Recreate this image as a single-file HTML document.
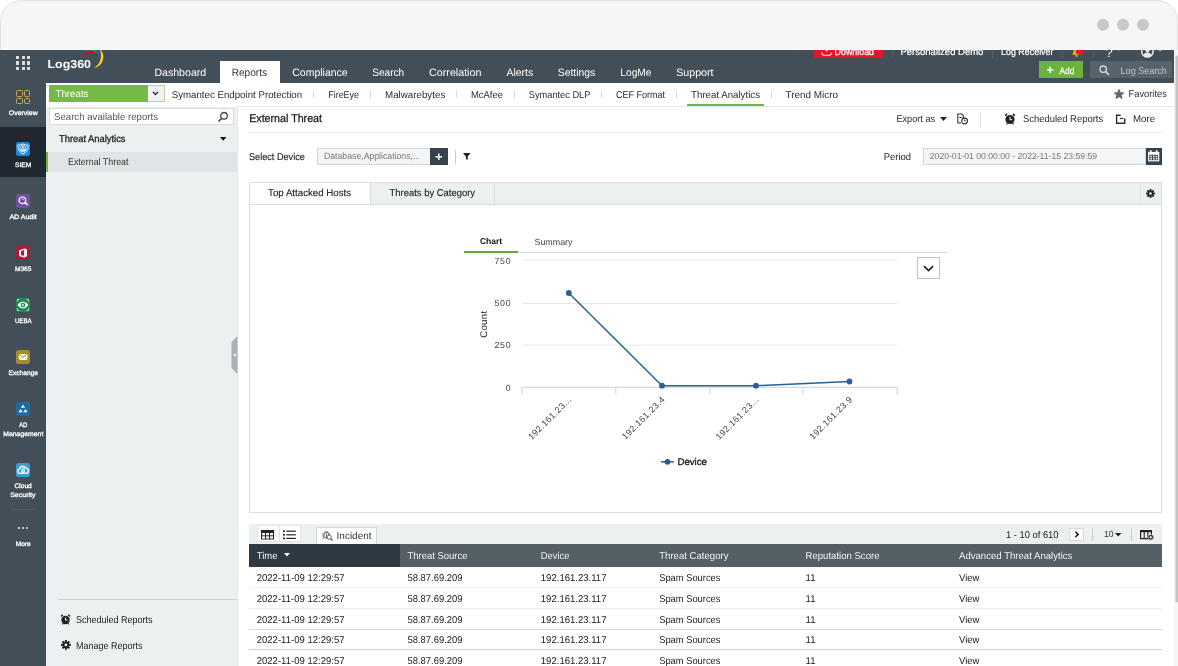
<!DOCTYPE html>
<html><head><meta charset="utf-8"><title>Log360 - External Threat</title>
<style>
html,body{margin:0;padding:0;background:#fff;}
body{width:1178px;height:666px;overflow:hidden;position:relative;font-family:"Liberation Sans",Arial,sans-serif;}
#frame{position:absolute;left:0;top:0;width:1178px;height:700px;box-sizing:border-box;background:#f6f6f6;border:1px solid #e2e2e2;border-radius:21px 21px 0 0;overflow:hidden;}
#app{position:absolute;left:0;top:50px;width:1178px;height:616px;overflow:hidden;background:#fff;}
#in{position:absolute;left:0;top:-50px;width:1178px;height:666px;will-change:transform;}
.t{position:absolute;white-space:nowrap;}
.r{position:absolute;}
svg{position:absolute;overflow:visible;}
</style></head><body>
<div id="frame"></div>
<svg style="left:1090px;top:10px" width="70" height="30" viewBox="0 0 70 30"><circle cx="13" cy="14.700" r="6" fill="#c9c9c9"/><circle cx="32.900" cy="14.700" r="6" fill="#c9c9c9"/><circle cx="52.900" cy="14.700" r="6" fill="#c9c9c9"/></svg>
<div class="r" style="left:1px;top:49px;width:1176px;height:1px;background:#fdfdfd"></div>
<div id="app"><div id="in">
<div class="r" style="left:0.00px;top:50.00px;width:1174.00px;height:33.00px;background:#434f58;"></div>
<div class="r" style="left:1174.00px;top:50.00px;width:4.00px;height:616.00px;background:#f6f6f6;"></div>
<svg style="left:1170px;top:50px" width="8" height="616" viewBox="0 0 8 616"><rect x="5.400" y="5.800" width="3" height="546.5" fill="#c3c3c3"/></svg>
<div class="r" style="left:0.00px;top:82.00px;width:46.00px;height:584.00px;background:#434f58;"></div>
<div class="r" style="left:0.00px;top:127.00px;width:46.00px;height:50.00px;background:#1f2730;"></div>
<div class="r" style="left:15.80px;top:55.80px;width:3.20px;height:3.20px;background:#d9dde0;"></div>
<div class="r" style="left:15.80px;top:61.40px;width:3.20px;height:3.20px;background:#d9dde0;"></div>
<div class="r" style="left:15.80px;top:67.00px;width:3.20px;height:3.20px;background:#d9dde0;"></div>
<div class="r" style="left:21.50px;top:55.80px;width:3.20px;height:3.20px;background:#d9dde0;"></div>
<div class="r" style="left:21.50px;top:61.40px;width:3.20px;height:3.20px;background:#d9dde0;"></div>
<div class="r" style="left:21.50px;top:67.00px;width:3.20px;height:3.20px;background:#d9dde0;"></div>
<div class="r" style="left:27.20px;top:55.80px;width:3.20px;height:3.20px;background:#d9dde0;"></div>
<div class="r" style="left:27.20px;top:61.40px;width:3.20px;height:3.20px;background:#d9dde0;"></div>
<div class="r" style="left:27.20px;top:67.00px;width:3.20px;height:3.20px;background:#d9dde0;"></div>
<svg style="left:80px;top:44px" width="30" height="26" viewBox="0 0 30 26"><path d="M3.60 6.60A6.93 6.93 0 0 1 16.80 10.00A16.95 16.95 0 0 0 3.60 6.60Z" fill="#1f9a48"/><path d="M14.50 4.50A7.49 7.49 0 0 1 19.90 13.90A23.00 23.00 0 0 0 14.50 4.50Z" fill="#1f6bb5"/><path d="M18.60 4.00A10.98 10.98 0 0 1 13.80 23.90A13.76 13.76 0 0 0 18.60 4.00Z" fill="#f4d21f"/><path d="M2.10 13.10A7.78 7.78 0 0 1 16.50 10.40A13.99 13.99 0 0 0 2.10 13.10Z" fill="#c8102e"/></svg>
<div class="r" style="left:813.50px;top:46.00px;width:69.60px;height:11.80px;background:#e8122b;border-radius:2px;"></div>
<svg style="left:820.500px;top:46.200px" width="11.500" height="11" viewBox="0 0 11.500 11"><path d="M5.700 0v4.500M3.700 3l2 2 2-2" stroke="#f7b3bb" stroke-width="1.200" fill="none"/><path d="M.8 6.500c0 2.400 1 2.800 2.600 2.800h4.600c1.600 0 2.600-.4 2.600-2.800" stroke="#f9c3c9" stroke-width="1.300" fill="none"/></svg>
<div class="r" style="left:891.50px;top:46.00px;width:1.00px;height:11.50px;background:#535f67;"></div>
<div class="r" style="left:991.50px;top:46.00px;width:1.00px;height:11.50px;background:#535f67;"></div>
<div class="r" style="left:1062.00px;top:46.00px;width:1.00px;height:11.50px;background:#535f67;"></div>
<svg style="left:1070px;top:44px" width="16" height="16" viewBox="0 0 16 16"><path d="M2 10.800c1.300-1 1.200-3 1.700-4.800.5-1.700 1.600-2.300 2.800-2.300s2.300.6 2.800 2.300c.5 1.800.4 3.800 1.700 4.800z" fill="#e9b21c"/><circle cx="6.500" cy="11.800" r="1.100" fill="#e9b21c"/><circle cx="9.600" cy="7" r="3.800" fill="#e3192d"/></svg>
<div class="r" style="left:1092.50px;top:46.00px;width:1.00px;height:11.50px;background:#535f67;"></div>
<svg style="left:1117.3px;top:48.3px" width="4" height="3" viewBox="0 0 4 3"><path d="M0 0h4L2 3z" fill="#aeb5ba"/></svg>
<svg style="left:1140.6px;top:45.2px" width="12.8" height="12.8" viewBox="0 0 14 14"><circle cx="7" cy="7" r="6.200" fill="none" stroke="#e8ebed" stroke-width="1.600"/><circle cx="7" cy="5.800" r="2.300" fill="#e8ebed"/><path d="M2.800 11.200c.5-2.200 2-3 4.200-3s3.700.8 4.200 3c-1 1.300-2.500 2-4.200 2s-3.200-.7-4.200-2z" fill="#e8ebed"/></svg>
<svg style="left:1157.5px;top:48.8px" width="4" height="3" viewBox="0 0 4 3"><path d="M0 0h4L2 3z" fill="#aeb5ba"/></svg>
<div class="r" style="left:219.50px;top:61.00px;width:60.00px;height:22.00px;background:#fff;"></div>
<div class="r" style="left:1038.70px;top:61.00px;width:44.20px;height:17.00px;background:#6cb33e;"></div>
<div class="r" style="left:1090.30px;top:61.00px;width:81.30px;height:17.00px;background:#57626a;"></div>
<svg style="left:1098.500px;top:64.500px" width="11" height="11" viewBox="0 0 11 11"><circle cx="4.200" cy="4.200" r="3.200" fill="none" stroke="#d5dadd" stroke-width="1.300"/><path d="M6.600 6.600L10 10" stroke="#d5dadd" stroke-width="1.500"/></svg>
<div class="r" style="left:46.00px;top:83.00px;width:1128.00px;height:22.50px;background:#fff;"></div>
<div class="r" style="left:237.00px;top:105.50px;width:937.00px;height:1.00px;background:#e6e9eb;"></div>
<div class="r" style="left:49.00px;top:85.00px;width:115.50px;height:17.00px;background:#f1f1f1;border:1px solid #b5d69c;box-sizing:border-box;"></div>
<div class="r" style="left:49.00px;top:85.00px;width:98.50px;height:17.00px;background:#77b946;"></div>
<svg style="left:152.300px;top:91.200px" width="7" height="5.250" viewBox="0 0 8 6"><path d="M1 1l3 3 3-3" stroke="#222" stroke-width="1.500" fill="none"/></svg>
<div class="r" style="left:313.00px;top:89.50px;width:1.00px;height:8.50px;background:#d9dcde;"></div>
<div class="r" style="left:369.70px;top:89.50px;width:1.00px;height:8.50px;background:#d9dcde;"></div>
<div class="r" style="left:456.10px;top:89.50px;width:1.00px;height:8.50px;background:#d9dcde;"></div>
<div class="r" style="left:513.50px;top:89.50px;width:1.00px;height:8.50px;background:#d9dcde;"></div>
<div class="r" style="left:601.00px;top:89.50px;width:1.00px;height:8.50px;background:#d9dcde;"></div>
<div class="r" style="left:676.20px;top:89.50px;width:1.00px;height:8.50px;background:#d9dcde;"></div>
<div class="r" style="left:771.25px;top:89.50px;width:1.00px;height:8.50px;background:#d9dcde;"></div>
<div class="r" style="left:687.25px;top:104.00px;width:76.50px;height:2.00px;background:#6fb53f;"></div>
<svg style="left:1112.500px;top:87.500px" width="12" height="12" viewBox="0 0 12 12"><path d="M6 .5l1.700 3.700 4 .4-3 2.700.9 4L6 9.200l-3.600 2.100.9-4-3-2.700 4-.4z" fill="#5f6b74"/></svg>
<div class="r" style="left:46.00px;top:107.00px;width:190.50px;height:560.00px;background:#ecf0f1;"></div>
<div class="r" style="left:236.50px;top:107.00px;width:1.00px;height:560.00px;background:#e6e9eb;"></div>
<div class="r" style="left:49.00px;top:108.00px;width:184.80px;height:16.50px;background:#fff;border:1px solid #d9dcde;box-sizing:border-box;"></div>
<svg style="left:217px;top:110.500px" width="12" height="12" viewBox="0 0 12 12"><circle cx="7" cy="4.800" r="3.300" fill="none" stroke="#444" stroke-width="1.300"/><path d="M4.700 7.300L1.500 10.500" stroke="#444" stroke-width="1.600"/></svg>
<svg style="left:219.500px;top:136.700px" width="7" height="4.400" viewBox="0 0 8 5"><path d="M0 0h7.400L3.700 4.200z" fill="#111"/></svg>
<div class="r" style="left:46.00px;top:152.00px;width:190.50px;height:20.00px;background:#e0e4e6;"></div>
<div class="r" style="left:46.00px;top:152.00px;width:2.00px;height:20.00px;background:#6fb53f;"></div>
<div class="r" style="left:58.00px;top:599.00px;width:179.00px;height:1.00px;background:#cfd3d5;"></div>
<svg style="left:59.800px;top:614px" width="11" height="11" viewBox="0 0 12 12"><circle cx="6" cy="6.500" r="4.600" fill="#222"/><path d="M1.200 2.600L3 .9M10.800 2.600L9 .9" stroke="#222" stroke-width="1.600"/><path d="M2.500 11.300l1-1.200M9.500 11.300l-1-1.200" stroke="#222" stroke-width="1.200"/><path d="M6 3.800v2.900h2.200" stroke="#fff" stroke-width="1" fill="none"/></svg>
<svg style="left:60.800px;top:640.300px" width="9.800" height="9.800" viewBox="0 0 11 11"><g fill="#222"><circle cx="5.500" cy="5.500" r="3.700"/><g id="gt"><rect x="4.400" y="0" width="2.200" height="11"/><rect x="0" y="4.400" width="11" height="2.200"/></g><g transform="rotate(45 5.500 5.500)"><rect x="4.400" y="0" width="2.200" height="11"/><rect x="0" y="4.400" width="11" height="2.200"/></g></g><circle cx="5.500" cy="5.500" r="1.600" fill="#ecf0f1"/></svg>
<svg style="left:230.500px;top:336px" width="7" height="38" viewBox="0 0 7 38"><path d="M6.500 0L0.500 6v26l6 6z" fill="#aab0b5"/><path d="M4.700 17l-2.400 2 2.400 2z" fill="#fff"/></svg>
<div class="r" style="left:249.00px;top:132.00px;width:913.00px;height:1.00px;background:#e6e9eb;"></div>
<svg style="left:939.500px;top:116.500px" width="8" height="5" viewBox="0 0 8 5"><path d="M0 0h7L3.500 4z" fill="#222"/></svg>
<svg style="left:957px;top:113px" width="12" height="12" viewBox="0 0 12 12"><path d="M.8 10V1h4l1.500 1.500V5" stroke="#333" stroke-width="1.100" fill="none"/><path d="M.8 10H4" stroke="#333" stroke-width="1.100"/><path d="M2.300 4.500h2.500" stroke="#333" stroke-width="1"/><circle cx="7.600" cy="8" r="2.900" fill="none" stroke="#333" stroke-width="1.100"/><path d="M7.600 6.500V8h1.300" stroke="#333" stroke-width="0.900" fill="none"/></svg>
<div class="r" style="left:980.30px;top:111.50px;width:1.00px;height:15.00px;background:#dfe2e4;"></div>
<svg style="left:1003.500px;top:112.500px" width="12" height="12" viewBox="0 0 12 12"><circle cx="6" cy="6.500" r="4.600" fill="#222"/><path d="M1.200 2.600L3 .9M10.800 2.600L9 .9" stroke="#222" stroke-width="1.600"/><path d="M2.500 11.300l1-1.200M9.500 11.300l-1-1.200" stroke="#222" stroke-width="1.200"/><path d="M6 3.800v2.900h2.200" stroke="#fff" stroke-width="1" fill="none"/></svg>
<svg style="left:1115px;top:114px" width="12" height="11" viewBox="0 0 12 11"><path d="M5.700 1.200H1.600v8h8.100V4.500" stroke="#2b3036" stroke-width="1.400" fill="none"/><path d="M4.800 4.500h3.600" stroke="#2b3036" stroke-width="1.200" fill="none"/></svg>
<div class="r" style="left:317.00px;top:148.00px;width:113.50px;height:17.00px;background:#f4f5f6;border:1px solid #d4d7d9;box-sizing:border-box;"></div>
<div class="r" style="left:430.30px;top:148.00px;width:17.70px;height:17.00px;background:#36434d;"></div>
<div class="r" style="left:455.00px;top:149.50px;width:1.00px;height:14.00px;background:#c9cccf;"></div>
<svg style="left:462.6px;top:153px" width="8" height="8" viewBox="0 0 9 9"><path d="M0 0h8.500L5.300 3.800V8L3.200 6.700V3.800z" fill="#222"/></svg>
<div class="r" style="left:923.00px;top:148.00px;width:223.00px;height:17.00px;background:#f4f5f6;border:1px solid #d4d7d9;box-sizing:border-box;"></div>
<div class="r" style="left:1145.50px;top:148.00px;width:16.70px;height:17.00px;background:#36434d;"></div>
<svg style="left:1148px;top:150px" width="12" height="12" viewBox="0 0 12 12"><rect x=".7" y="2.500" width="10" height="8.300" fill="none" stroke="#fff" stroke-width="1.200"/><rect x=".7" y="2.500" width="10" height="2.300" fill="#fff"/><path d="M2.700 .3v3M8.700 .3v3" stroke="#fff" stroke-width="1.700"/><path d="M2.300 6.500h7M2.300 8.700h7" stroke="#fff" stroke-width="1.400" stroke-dasharray="1.600 1.100"/></svg>
<div class="r" style="left:249.00px;top:182.00px;width:913.00px;height:331.00px;background:#fff;border:1px solid #dcdfe1;box-sizing:border-box;"></div>
<div class="r" style="left:250.00px;top:183.00px;width:911.00px;height:21.00px;background:#ecf0f1;"></div>
<div class="r" style="left:250.00px;top:204.00px;width:911.00px;height:1.00px;background:#d9dcde;"></div>
<div class="r" style="left:250.00px;top:183.00px;width:120.00px;height:21.00px;background:#fff;"></div>
<div class="r" style="left:370.00px;top:183.00px;width:1.00px;height:21.00px;background:#dcdfe1;"></div>
<div class="r" style="left:494.20px;top:183.00px;width:1.00px;height:21.00px;background:#dcdfe1;"></div>
<div class="r" style="left:1139.50px;top:184.00px;width:1.00px;height:20.00px;background:#e2e5e7;"></div>
<svg style="left:1146.2px;top:189.300px" width="9" height="9" viewBox="0 0 11 11"><g fill="#222"><circle cx="5.500" cy="5.500" r="3.700"/><rect x="4.400" y="0" width="2.200" height="11"/><rect x="0" y="4.400" width="11" height="2.200"/><g transform="rotate(45 5.500 5.500)"><rect x="4.400" y="0" width="2.200" height="11"/><rect x="0" y="4.400" width="11" height="2.200"/></g></g><circle cx="5.500" cy="5.500" r="1.600" fill="#ecf0f1"/></svg>
<div class="r" style="left:464.00px;top:252.00px;width:483.00px;height:1.00px;background:#d9d9d9;"></div>
<div class="r" style="left:464.00px;top:251.00px;width:53.50px;height:2.00px;background:#63a934;"></div>
<div class="r" style="left:916.50px;top:257.00px;width:23.50px;height:22.00px;background:#fff;border:1px solid #bfc3c6;box-sizing:border-box;"></div>
<svg style="left:923px;top:264.500px" width="11" height="8" viewBox="0 0 11 8"><path d="M1 1.200l4.500 4.300L10 1.200" stroke="#222" stroke-width="1.700" fill="none"/></svg>
<svg style="left:0;top:0;text-rendering:geometricPrecision" width="1178" height="666" viewBox="0 0 1178 666" font-family="Liberation Sans, Arial, sans-serif"><path d="M522.500 260.2H897.300" stroke="#e6e6e6" stroke-width="1"/><path d="M522.500 303.5H897.300" stroke="#e6e6e6" stroke-width="1"/><path d="M522.500 345.2H897.300" stroke="#e6e6e6" stroke-width="1"/><path d="M521.800 387.300H897.300" stroke="#c6d3e3" stroke-width="1"/><path d="M521.8 387.300V394.500" stroke="#c6d3e3" stroke-width="1"/><path d="M615.8 387.300V394.500" stroke="#c6d3e3" stroke-width="1"/><path d="M710.0 387.300V394.500" stroke="#c6d3e3" stroke-width="1"/><path d="M802.8 387.300V394.500" stroke="#c6d3e3" stroke-width="1"/><path d="M897.3 387.300V394.500" stroke="#c6d3e3" stroke-width="1"/><text x="511.300" y="264.0" text-anchor="end" font-size="8.800" letter-spacing="0.700" fill="#444">750</text><text x="511.300" y="306.0" text-anchor="end" font-size="8.800" letter-spacing="0.700" fill="#444">500</text><text x="511.300" y="348.0" text-anchor="end" font-size="8.800" letter-spacing="0.700" fill="#444">250</text><text x="511.300" y="391.0" text-anchor="end" font-size="8.800" letter-spacing="0.700" fill="#444">0</text><text transform="translate(486.500 324.200) rotate(-90)" text-anchor="middle" font-size="9.600" fill="#222" letter-spacing="0.300">Count</text><path d="M568.800 293L662 385.700L756 385.700L849.500 381.500" stroke="#2a5f94" stroke-width="1.500" fill="none" stroke-linejoin="round"/><circle cx="568.8" cy="293.0" r="2.900" fill="#2a5f94"/><circle cx="662.0" cy="385.7" r="2.900" fill="#2a5f94"/><circle cx="756.0" cy="385.7" r="2.900" fill="#2a5f94"/><circle cx="849.5" cy="381.5" r="2.900" fill="#2a5f94"/><text transform="translate(572.0 400.000) rotate(-45)" text-anchor="end" font-size="8.900" letter-spacing="0.400" fill="#444">192.161.23...</text><text transform="translate(665.5 400.000) rotate(-45)" text-anchor="end" font-size="8.900" letter-spacing="0.400" fill="#444">192.161.23.4</text><text transform="translate(759.5 400.000) rotate(-45)" text-anchor="end" font-size="8.900" letter-spacing="0.400" fill="#444">192.161.23...</text><text transform="translate(853.0 400.000) rotate(-45)" text-anchor="end" font-size="8.900" letter-spacing="0.400" fill="#444">192.161.23.9</text><path d="M661 461.800H674" stroke="#2a5f94" stroke-width="1.500"/><circle cx="667.500" cy="461.800" r="2.900" fill="#2a5f94"/><text x="677.400" y="465.200" font-size="9.700" fill="#222" stroke="#222" stroke-width="0.350">Device</text></svg>
<div class="r" style="left:249.00px;top:524.00px;width:913.00px;height:20.50px;background:#ecf0f1;"></div>
<div class="r" style="left:256.70px;top:525.30px;width:44.00px;height:16.70px;background:#fff;border:1px solid #e1e4e6;box-sizing:border-box;"></div>
<div class="r" style="left:278.70px;top:526.00px;width:1.00px;height:16.00px;background:#e1e4e6;"></div>
<svg style="left:261.000px;top:529.800px" width="13" height="10" viewBox="0 0 13 10"><rect x="0" y="0" width="13" height="9.500" fill="#222"/><path d="M1 3.200h11v.01M1 3.200" stroke="none"/><rect x="1" y="3" width="3" height="2.300" fill="#fff"/><rect x="5" y="3" width="3" height="2.300" fill="#fff"/><rect x="9" y="3" width="3" height="2.300" fill="#fff"/><rect x="1" y="6.300" width="3" height="2.300" fill="#fff"/><rect x="5" y="6.300" width="3" height="2.300" fill="#fff"/><rect x="9" y="6.300" width="3" height="2.300" fill="#fff"/></svg>
<svg style="left:283px;top:529.500px" width="13" height="10" viewBox="0 0 13 10"><g fill="#222"><rect x="0" y=".3" width="1.800" height="1.800"/><rect x="0" y="3.900" width="1.800" height="1.800"/><rect x="0" y="7.500" width="1.800" height="1.800"/><rect x="3.300" y=".6" width="9.500" height="1.200"/><rect x="3.300" y="4.200" width="9.500" height="1.200"/><rect x="3.300" y="7.800" width="9.500" height="1.200"/></g></svg>
<div class="r" style="left:316.00px;top:527.00px;width:60.50px;height:17.50px;background:#fff;border:1px solid #d6dadc;border-bottom:none;box-sizing:border-box;"></div>
<svg style="left:322px;top:530px" width="11" height="11" viewBox="0 0 11 11"><g stroke="#555" fill="none" stroke-width="0.900"><rect x="2" y="2.200" width="4.800" height="6" rx="2.200"/><path d="M2.700 1.200l1 1M6 1.200l-1 1M.3 4h1.700M.3 6h1.700M.5 8.500l1.600-.8M6.800 4h1.500M4.400 3v5"/><circle cx="7.200" cy="7.200" r="2.100" fill="#fff"/><path d="M8.700 8.700l1.800 1.800" stroke-width="1.200"/></g></svg>
<div class="r" style="left:1069.00px;top:528.00px;width:14.70px;height:12.50px;background:#fff;border:1px solid #d6dadc;box-sizing:border-box;"></div>
<svg style="left:1073.500px;top:531px" width="6" height="7" viewBox="0 0 6 7"><path d="M1.500 .8l2.600 2.600-2.600 2.600" stroke="#111" stroke-width="1.500" fill="none"/></svg>
<div class="r" style="left:1092.00px;top:528.00px;width:1.00px;height:12.50px;background:#c9cccf;"></div>
<svg style="left:1114.500px;top:532.500px" width="7" height="4" viewBox="0 0 7 4"><path d="M0 0h6.400L3.200 3.600z" fill="#222"/></svg>
<div class="r" style="left:1131.30px;top:528.00px;width:1.00px;height:12.50px;background:#c9cccf;"></div>
<svg style="left:1139.700px;top:530px" width="14" height="10" viewBox="0 0 14 10"><path d="M.6 .7h10.800v8H.6z" fill="none" stroke="#222" stroke-width="1.200"/><path d="M.6 1.400h10.800" stroke="#222" stroke-width="1.600"/><path d="M4.200 1v8M7.800 1v8" stroke="#222" stroke-width="1.100"/><circle cx="10.800" cy="7.200" r="2.800" fill="#222" stroke="#ecf0f1" stroke-width=".6"/><path d="M9.300 7.200h3M10.800 5.700v3" stroke="#fff" stroke-width=".9"/></svg>
<div class="r" style="left:249.00px;top:544.20px;width:913.00px;height:22.60px;background:#545f66;"></div>
<div class="r" style="left:249.00px;top:544.20px;width:150.70px;height:22.60px;background:#2e3a43;"></div>
<svg style="left:284.300px;top:553px" width="6.500" height="4" viewBox="0 0 8 5"><path d="M0 0h7.400L3.700 4.400z" fill="#fff"/></svg>
<div class="r" style="left:249.00px;top:587.00px;width:913.00px;height:1.00px;background:#f0f0f0;"></div>
<div class="r" style="left:249.00px;top:607.80px;width:913.00px;height:1.00px;background:#ebebeb;"></div>
<div class="r" style="left:249.00px;top:628.60px;width:913.00px;height:1.00px;background:#d4d4d4;"></div>
<div class="r" style="left:249.00px;top:649.40px;width:913.00px;height:1.00px;background:#d2d2d2;"></div>
<div class="r" style="left:15.90px;top:90.00px;width:6.80px;height:6.70px;background:transparent;border:1.200px solid #c9a365;border-radius:1.500px;box-sizing:border-box;"></div>
<div class="r" style="left:23.70px;top:90.00px;width:6.80px;height:6.70px;background:transparent;border:1.200px solid #c9a365;border-radius:1.500px;box-sizing:border-box;"></div>
<div class="r" style="left:15.90px;top:97.60px;width:6.80px;height:6.70px;background:transparent;border:1.200px solid #c9a365;border-radius:1.500px;box-sizing:border-box;"></div>
<div class="r" style="left:23.70px;top:97.60px;width:6.80px;height:6.70px;background:transparent;border:1.200px solid #c9a365;border-radius:1.500px;box-sizing:border-box;"></div>
<div class="r" style="left:16.00px;top:142.00px;width:14.00px;height:14.00px;background:#2087d3;border-radius:2.500px;"></div>
<svg style="left:16px;top:142px" width="14" height="14" viewBox="0 0 14 14"><path d="M7 1.900c1.600.9 3.300 1.300 5.200 1.400-.1 4-1.500 7-5.200 8.800C3.300 10.300 1.900 7.300 1.800 3.300c1.900-.1 3.600-.5 5.200-1.400z" fill="none" stroke="#fff" stroke-width=".9"/><circle cx="7" cy="6.700" r="3.100" fill="none" stroke="#fff" stroke-width=".8"/><path d="M7 4.600l1.700 3.100H5.300z" fill="none" stroke="#fff" stroke-width=".8"/><path d="M5 8.400h4" stroke="#fff" stroke-width=".9"/></svg>
<div class="r" style="left:16.00px;top:194.00px;width:14.00px;height:14.00px;background:#72509b;border-radius:2.500px;"></div>
<svg style="left:16px;top:194px" width="14" height="14" viewBox="0 0 14 14"><circle cx="6.400" cy="6.300" r="3.300" fill="none" stroke="#fff" stroke-width="1.200"/><path d="M8.900 8.700l2.900 2.300" stroke="#fff" stroke-width="1.500"/><path d="M6 5.300c.8-.3 1.500 0 1.900.7" stroke="#fff" stroke-width=".8" fill="none"/></svg>
<div class="r" style="left:16.00px;top:246.00px;width:14.00px;height:14.00px;background:#a51e36;border-radius:2.500px;"></div>
<svg style="left:16px;top:246px" width="14" height="14" viewBox="0 0 14 14"><path d="M3 4.500L8.400 2.400l2.500.8v7.200l-2.500.8L3 9.500z" fill="#fff"/><path d="M4.900 5.100l3.200-1v5.600l-3.200-.5z" fill="#a51e36"/><path d="M3 9.500l5.400 1.700" stroke="#fff" stroke-width=".8"/></svg>
<div class="r" style="left:16.00px;top:297.50px;width:14.00px;height:14.20px;background:#1f8c4f;border-radius:2.500px;"></div>
<svg style="left:16px;top:297.700px" width="14" height="14" viewBox="0 0 14 14"><path d="M1.600 7C3.300 4.500 5.200 3.700 7 3.700s3.700.8 5.400 3.300C10.700 9.500 8.800 10.300 7 10.300S3.300 9.500 1.600 7z" fill="#fff"/><circle cx="7" cy="7" r="2.300" fill="#1f8c4f"/><circle cx="7" cy="7" r=".9" fill="#fff"/><path d="M1.400 3.600v-2h2M10.600 1.600h2v2M12.600 10.400v2h-2M3.400 12.400h-2v-2" stroke="#bfe3cf" stroke-width=".9" fill="none"/></svg>
<div class="r" style="left:16.00px;top:350.00px;width:14.00px;height:13.70px;background:#a48c2b;border-radius:2.500px;"></div>
<svg style="left:16px;top:350px" width="14" height="14" viewBox="0 0 14 14"><rect x="2.800" y="4" width="8.600" height="6" rx="1" fill="#fff"/><path d="M3.300 4.500L7 7.400l3.700-2.900" stroke="#8c7620" stroke-width="1" fill="none"/><path d="M3.400 9.500l1.700-1.500M10.600 9.500L8.900 8" stroke="#a48c2b" stroke-width=".6" fill="none"/></svg>
<div class="r" style="left:16.00px;top:402.00px;width:14.00px;height:13.70px;background:#1e6ba1;border-radius:2.500px;"></div>
<svg style="left:16px;top:402px" width="14" height="14" viewBox="0 0 14 14"><path d="M7 2.500l2.100 3.300H4.900zM4.600 6.900l2.100 3.300H2.500zM9.400 6.900l2.100 3.300H7.300z" fill="#fff"/></svg>
<div class="r" style="left:16.00px;top:463.00px;width:14.00px;height:13.80px;background:#3c9ed4;border-radius:2.500px;"></div>
<svg style="left:16px;top:463px" width="14" height="14" viewBox="0 0 14 14"><path d="M4.200 10.300c-1.500 0-2.500-.9-2.500-2.200 0-1.100.8-2 1.900-2.200C3.900 4.300 5.200 3.200 6.800 3.200c1.400 0 2.500.8 3 2 1.500.1 2.600 1.100 2.600 2.500s-1.100 2.600-2.600 2.600z" fill="none" stroke="#fff" stroke-width="1.300"/><rect x="5.200" y="6.400" width="3.700" height="3.400" rx=".4" fill="#fff"/><path d="M6 6.500v-.8a1.050 1.050 0 0 1 2.100 0v.8" stroke="#fff" stroke-width=".9" fill="none"/><rect x="6.500" y="7.400" width="1.100" height="1.300" fill="#3c9ed4"/></svg>
<div class="r" style="left:10.70px;top:508.50px;width:25.00px;height:1.00px;background:#535f68;"></div>
<div class="r" style="left:18.30px;top:526.80px;width:2.00px;height:2.00px;background:#e6e9eb;border-radius:50%;"></div>
<div class="r" style="left:22.30px;top:526.80px;width:2.00px;height:2.00px;background:#e6e9eb;border-radius:50%;"></div>
<div class="r" style="left:26.30px;top:526.80px;width:2.00px;height:2.00px;background:#e6e9eb;border-radius:50%;"></div>
<svg style="left:0;top:0;text-rendering:geometricPrecision" width="1178" height="666" viewBox="0 0 1178 666" font-family="Liberation Sans, Arial, sans-serif">
<text x="47.50" y="67.52" font-size="11.60" fill="#fff" textLength="43.50" lengthAdjust="spacingAndGlyphs" font-weight="bold">Log360</text>
<text x="834.60" y="55.06" font-size="10.00" fill="#fff" textLength="39.40" lengthAdjust="spacingAndGlyphs" stroke="#fff" stroke-width="0.25">Download</text>
<text x="900.50" y="55.13" font-size="10.20" fill="#fff" textLength="82.90" lengthAdjust="spacingAndGlyphs" stroke="#fff" stroke-width="0.20">Personalized Demo</text>
<text x="1001.00" y="55.13" font-size="10.20" fill="#fff" textLength="52.50" lengthAdjust="spacingAndGlyphs" stroke="#fff" stroke-width="0.20">Log Receiver</text>
<text x="1105.40" y="56.80" font-size="13.00" fill="#fff">?</text>
<text x="154.40" y="75.91" font-size="10.70" fill="#fff" textLength="51.80" lengthAdjust="spacingAndGlyphs">Dashboard</text>
<text x="231.70" y="75.91" font-size="10.70" fill="#333" textLength="35.30" lengthAdjust="spacingAndGlyphs">Reports</text>
<text x="292.30" y="75.91" font-size="10.70" fill="#fff" textLength="55.30" lengthAdjust="spacingAndGlyphs">Compliance</text>
<text x="372.30" y="75.91" font-size="10.70" fill="#fff" textLength="31.90" lengthAdjust="spacingAndGlyphs">Search</text>
<text x="429.10" y="75.91" font-size="10.70" fill="#fff" textLength="52.30" lengthAdjust="spacingAndGlyphs">Correlation</text>
<text x="506.40" y="75.91" font-size="10.70" fill="#fff" textLength="26.80" lengthAdjust="spacingAndGlyphs">Alerts</text>
<text x="557.80" y="75.91" font-size="10.70" fill="#fff" textLength="37.40" lengthAdjust="spacingAndGlyphs">Settings</text>
<text x="620.30" y="75.91" font-size="10.70" fill="#fff" textLength="31.20" lengthAdjust="spacingAndGlyphs">LogMe</text>
<text x="676.20" y="75.91" font-size="10.70" fill="#fff" textLength="37.30" lengthAdjust="spacingAndGlyphs">Support</text>
<text x="1046.50" y="74.43" font-size="12.50" fill="#fff" font-weight="bold">+</text>
<text x="1059.50" y="73.66" font-size="9.40" fill="#fff" textLength="14.90" lengthAdjust="spacingAndGlyphs" stroke="#fff" stroke-width="0.25">Add</text>
<text x="1120.60" y="74.27" font-size="10.00" fill="#c3c9cd" textLength="46.20" lengthAdjust="spacingAndGlyphs">Log Search</text>
<text x="55.50" y="96.93" font-size="10.20" fill="#fff" textLength="33.00" lengthAdjust="spacingAndGlyphs">Threats</text>
<text x="171.70" y="98.43" font-size="9.90" fill="#2b2b2b" textLength="130.40" lengthAdjust="spacingAndGlyphs">Symantec Endpoint Protection</text>
<text x="328.25" y="98.43" font-size="9.90" fill="#2b2b2b" textLength="30.75" lengthAdjust="spacingAndGlyphs">FireEye</text>
<text x="385.00" y="98.43" font-size="9.90" fill="#2b2b2b" textLength="60.30" lengthAdjust="spacingAndGlyphs">Malwarebytes</text>
<text x="471.00" y="98.43" font-size="9.90" fill="#2b2b2b" textLength="32.00" lengthAdjust="spacingAndGlyphs">McAfee</text>
<text x="528.80" y="98.43" font-size="9.90" fill="#2b2b2b" textLength="61.60" lengthAdjust="spacingAndGlyphs">Symantec DLP</text>
<text x="616.00" y="98.43" font-size="9.90" fill="#2b2b2b" textLength="49.10" lengthAdjust="spacingAndGlyphs">CEF Format</text>
<text x="691.10" y="98.43" font-size="9.90" fill="#2b2b2b" textLength="68.90" lengthAdjust="spacingAndGlyphs">Threat Analytics</text>
<text x="785.50" y="98.43" font-size="9.90" fill="#2b2b2b" textLength="52.50" lengthAdjust="spacingAndGlyphs">Trend Micro</text>
<text x="1128.60" y="97.23" font-size="9.90" fill="#2b2b2b" textLength="38.20" lengthAdjust="spacingAndGlyphs">Favorites</text>
<text x="54.00" y="119.73" font-size="9.90" fill="#555" textLength="104.00" lengthAdjust="spacingAndGlyphs">Search available reports</text>
<text x="59.00" y="142.43" font-size="9.90" fill="#222" textLength="66.50" lengthAdjust="spacingAndGlyphs" stroke="#222" stroke-width="0.30">Threat Analytics</text>
<text x="68.00" y="165.33" font-size="9.90" fill="#333" textLength="60.50" lengthAdjust="spacingAndGlyphs">External Threat</text>
<text x="76.00" y="623.23" font-size="9.90" fill="#222" textLength="76.50" lengthAdjust="spacingAndGlyphs">Scheduled Reports</text>
<text x="76.00" y="648.73" font-size="9.90" fill="#222" textLength="66.50" lengthAdjust="spacingAndGlyphs">Manage Reports</text>
<text x="249.20" y="122.42" font-size="11.30" fill="#151515" textLength="72.80" lengthAdjust="spacingAndGlyphs" stroke="#151515" stroke-width="0.25">External Threat</text>
<text x="896.40" y="122.13" font-size="9.90" fill="#2b2b2b" textLength="38.70" lengthAdjust="spacingAndGlyphs">Export as</text>
<text x="1023.00" y="122.13" font-size="9.90" fill="#2b2b2b" textLength="80.10" lengthAdjust="spacingAndGlyphs">Scheduled Reports</text>
<text x="1133.00" y="122.33" font-size="9.90" fill="#2b2b2b" textLength="22.00" lengthAdjust="spacingAndGlyphs">More</text>
<text x="249.00" y="159.93" font-size="9.90" fill="#222" textLength="55.80" lengthAdjust="spacingAndGlyphs" stroke="#222" stroke-width="0.12">Select Device</text>
<text x="324.00" y="159.39" font-size="9.20" fill="#777" textLength="96.20" lengthAdjust="spacingAndGlyphs">Database,Applications,...</text>
<text x="434.90" y="161.20" font-size="13.00" fill="#fff" font-weight="bold">+</text>
<text x="883.80" y="159.93" font-size="9.90" fill="#222" textLength="27.10" lengthAdjust="spacingAndGlyphs">Period</text>
<text x="929.80" y="159.01" font-size="8.70" fill="#777" textLength="167.20" lengthAdjust="spacingAndGlyphs">2020-01-01 00:00:00 - 2022-11-15 23:59:59</text>
<text x="268.10" y="196.03" font-size="9.90" fill="#222" textLength="83.00" lengthAdjust="spacingAndGlyphs" stroke="#222" stroke-width="0.12">Top Attacked Hosts</text>
<text x="389.60" y="196.03" font-size="9.90" fill="#222" textLength="85.40" lengthAdjust="spacingAndGlyphs" stroke="#222" stroke-width="0.12">Threats by Category</text>
<text x="480.00" y="243.98" font-size="8.60" fill="#111" textLength="22.00" lengthAdjust="spacingAndGlyphs" font-weight="bold">Chart</text>
<text x="534.50" y="244.85" font-size="8.80" fill="#444" textLength="38.00" lengthAdjust="spacingAndGlyphs">Summary</text>
<text x="336.60" y="538.73" font-size="9.90" fill="#333" textLength="34.90" lengthAdjust="spacingAndGlyphs">Incident</text>
<text x="1006.00" y="538.23" font-size="9.90" fill="#222" textLength="52.50" lengthAdjust="spacingAndGlyphs">1 - 10 of 610</text>
<text x="1103.90" y="536.95" font-size="8.80" fill="#333" textLength="9.70" lengthAdjust="spacingAndGlyphs">10</text>
<text x="256.70" y="559.03" font-size="9.90" fill="#f2f4f5" textLength="20.80" lengthAdjust="spacingAndGlyphs">Time</text>
<text x="407.50" y="559.03" font-size="9.90" fill="#f2f4f5" textLength="60.00" lengthAdjust="spacingAndGlyphs">Threat Source</text>
<text x="540.80" y="559.03" font-size="9.90" fill="#f2f4f5" textLength="28.70" lengthAdjust="spacingAndGlyphs">Device</text>
<text x="659.20" y="559.03" font-size="9.90" fill="#f2f4f5" textLength="69.30" lengthAdjust="spacingAndGlyphs">Threat Category</text>
<text x="805.50" y="559.03" font-size="9.90" fill="#f2f4f5" textLength="74.00" lengthAdjust="spacingAndGlyphs">Reputation Score</text>
<text x="959.00" y="559.03" font-size="9.90" fill="#f2f4f5" textLength="113.40" lengthAdjust="spacingAndGlyphs">Advanced Threat Analytics</text>
<text x="256.70" y="581.43" font-size="9.90" fill="#222" textLength="87.80" lengthAdjust="spacingAndGlyphs">2022-11-09 12:29:57</text>
<text x="407.50" y="581.43" font-size="9.90" fill="#222" textLength="55.00" lengthAdjust="spacingAndGlyphs">58.87.69.209</text>
<text x="540.80" y="581.43" font-size="9.90" fill="#222" textLength="65.70" lengthAdjust="spacingAndGlyphs">192.161.23.117</text>
<text x="659.20" y="581.43" font-size="9.90" fill="#222" textLength="61.30" lengthAdjust="spacingAndGlyphs">Spam Sources</text>
<text x="805.50" y="581.43" font-size="9.90" fill="#222" textLength="10.00" lengthAdjust="spacingAndGlyphs">11</text>
<text x="959.00" y="581.43" font-size="9.90" fill="#222" textLength="20.50" lengthAdjust="spacingAndGlyphs">View</text>
<text x="256.70" y="602.03" font-size="9.90" fill="#222" textLength="87.80" lengthAdjust="spacingAndGlyphs">2022-11-09 12:29:57</text>
<text x="407.50" y="602.03" font-size="9.90" fill="#222" textLength="55.00" lengthAdjust="spacingAndGlyphs">58.87.69.209</text>
<text x="540.80" y="602.03" font-size="9.90" fill="#222" textLength="65.70" lengthAdjust="spacingAndGlyphs">192.161.23.117</text>
<text x="659.20" y="602.03" font-size="9.90" fill="#222" textLength="61.30" lengthAdjust="spacingAndGlyphs">Spam Sources</text>
<text x="805.50" y="602.03" font-size="9.90" fill="#222" textLength="10.00" lengthAdjust="spacingAndGlyphs">11</text>
<text x="959.00" y="602.03" font-size="9.90" fill="#222" textLength="20.50" lengthAdjust="spacingAndGlyphs">View</text>
<text x="256.70" y="622.73" font-size="9.90" fill="#222" textLength="87.80" lengthAdjust="spacingAndGlyphs">2022-11-09 12:29:57</text>
<text x="407.50" y="622.73" font-size="9.90" fill="#222" textLength="55.00" lengthAdjust="spacingAndGlyphs">58.87.69.209</text>
<text x="540.80" y="622.73" font-size="9.90" fill="#222" textLength="65.70" lengthAdjust="spacingAndGlyphs">192.161.23.117</text>
<text x="659.20" y="622.73" font-size="9.90" fill="#222" textLength="61.30" lengthAdjust="spacingAndGlyphs">Spam Sources</text>
<text x="805.50" y="622.73" font-size="9.90" fill="#222" textLength="10.00" lengthAdjust="spacingAndGlyphs">11</text>
<text x="959.00" y="622.73" font-size="9.90" fill="#222" textLength="20.50" lengthAdjust="spacingAndGlyphs">View</text>
<text x="256.70" y="643.43" font-size="9.90" fill="#222" textLength="87.80" lengthAdjust="spacingAndGlyphs">2022-11-09 12:29:57</text>
<text x="407.50" y="643.43" font-size="9.90" fill="#222" textLength="55.00" lengthAdjust="spacingAndGlyphs">58.87.69.209</text>
<text x="540.80" y="643.43" font-size="9.90" fill="#222" textLength="65.70" lengthAdjust="spacingAndGlyphs">192.161.23.117</text>
<text x="659.20" y="643.43" font-size="9.90" fill="#222" textLength="61.30" lengthAdjust="spacingAndGlyphs">Spam Sources</text>
<text x="805.50" y="643.43" font-size="9.90" fill="#222" textLength="10.00" lengthAdjust="spacingAndGlyphs">11</text>
<text x="959.00" y="643.43" font-size="9.90" fill="#222" textLength="20.50" lengthAdjust="spacingAndGlyphs">View</text>
<text x="256.70" y="664.13" font-size="9.90" fill="#222" textLength="87.80" lengthAdjust="spacingAndGlyphs">2022-11-09 12:29:57</text>
<text x="407.50" y="664.13" font-size="9.90" fill="#222" textLength="55.00" lengthAdjust="spacingAndGlyphs">58.87.69.209</text>
<text x="540.80" y="664.13" font-size="9.90" fill="#222" textLength="65.70" lengthAdjust="spacingAndGlyphs">192.161.23.117</text>
<text x="659.20" y="664.13" font-size="9.90" fill="#222" textLength="61.30" lengthAdjust="spacingAndGlyphs">Spam Sources</text>
<text x="805.50" y="664.13" font-size="9.90" fill="#222" textLength="10.00" lengthAdjust="spacingAndGlyphs">11</text>
<text x="959.00" y="664.13" font-size="9.90" fill="#222" textLength="20.50" lengthAdjust="spacingAndGlyphs">View</text>
<text x="8.80" y="115.25" font-size="6.50" fill="#fff" textLength="28.90" lengthAdjust="spacingAndGlyphs" stroke="#fff" stroke-width="0.30">Overview</text>
<text x="15.00" y="167.05" font-size="6.50" fill="#fff" textLength="16.20" lengthAdjust="spacingAndGlyphs" stroke="#fff" stroke-width="0.30">SIEM</text>
<text x="9.40" y="218.95" font-size="6.50" fill="#fff" textLength="27.30" lengthAdjust="spacingAndGlyphs" stroke="#fff" stroke-width="0.30">AD Audit</text>
<text x="14.90" y="271.25" font-size="6.50" fill="#fff" textLength="16.50" lengthAdjust="spacingAndGlyphs" stroke="#fff" stroke-width="0.30">M365</text>
<text x="14.90" y="322.75" font-size="6.50" fill="#fff" textLength="16.80" lengthAdjust="spacingAndGlyphs" stroke="#fff" stroke-width="0.30">UEBA</text>
<text x="8.60" y="375.25" font-size="6.50" fill="#fff" textLength="29.40" lengthAdjust="spacingAndGlyphs" stroke="#fff" stroke-width="0.30">Exchange</text>
<text x="19.00" y="427.25" font-size="6.50" fill="#fff" textLength="8.30" lengthAdjust="spacingAndGlyphs" stroke="#fff" stroke-width="0.30">AD</text>
<text x="3.30" y="436.25" font-size="6.50" fill="#fff" textLength="40.00" lengthAdjust="spacingAndGlyphs" stroke="#fff" stroke-width="0.30">Management</text>
<text x="14.50" y="488.15" font-size="6.50" fill="#fff" textLength="17.20" lengthAdjust="spacingAndGlyphs" stroke="#fff" stroke-width="0.30">Cloud</text>
<text x="10.20" y="496.85" font-size="6.50" fill="#fff" textLength="25.30" lengthAdjust="spacingAndGlyphs" stroke="#fff" stroke-width="0.30">Security</text>
<text x="15.70" y="546.45" font-size="6.50" fill="#fff" textLength="14.90" lengthAdjust="spacingAndGlyphs" stroke="#fff" stroke-width="0.30">More</text>
</svg>
</div></div>
</body></html>
